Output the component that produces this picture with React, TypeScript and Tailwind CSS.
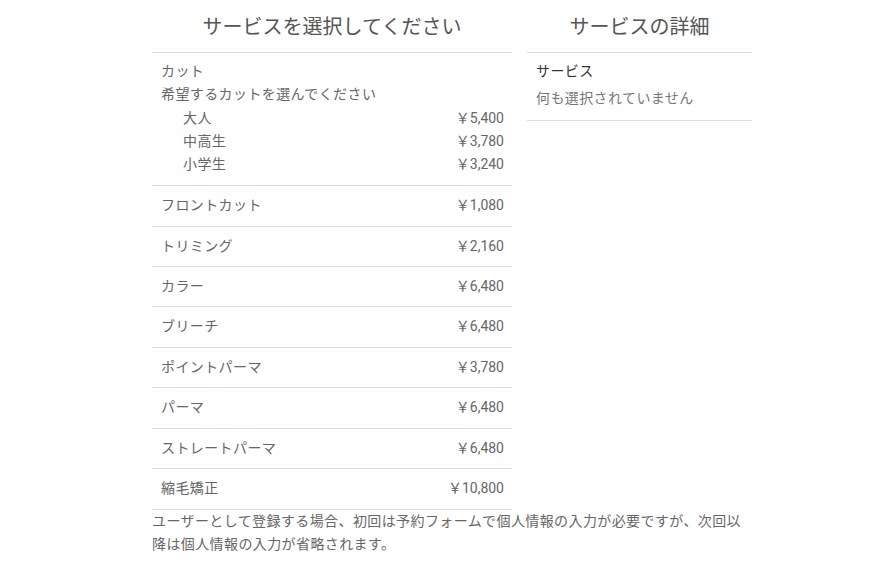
const cutOptions = [
  { name: '大人', price: '￥5,400' },
  { name: '中高生', price: '￥3,780' },
  { name: '小学生', price: '￥3,240' },
];

const services = [
  { name: 'フロントカット', price: '￥1,080' },
  { name: 'トリミング', price: '￥2,160' },
  { name: 'カラー', price: '￥6,480' },
  { name: 'ブリーチ', price: '￥6,480' },
  { name: 'ポイントパーマ', price: '￥3,780' },
  { name: 'パーマ', price: '￥6,480' },
  { name: 'ストレートパーマ', price: '￥6,480' },
  { name: '縮毛矯正', price: '￥10,800' },
];

const sans = { fontFamily: 'Roboto, "Noto Sans CJK JP", sans-serif' };
const serif = { fontFamily: '"Liberation Serif", "Noto Sans CJK JP", serif' };

export default function App() {
  return (
    <div className="min-h-screen w-full bg-white text-[14px] tracking-[0.4px] text-[#666]" style={sans}>
      <div className="ml-[152px] w-[600px]">
        <div className="flex gap-[15px]">
          {/* service list */}
          <div className="w-[360px]">
            <h2
              className="border-b border-[#ddd] pt-[13px] pb-[11px] text-center text-[20px] leading-[28px] tracking-normal text-[#555]"
              style={serif}
            >
              サービスを選択してください
            </h2>

            <div className="border-b border-[#ddd] pt-[7px] pb-[9px] pl-[9px] pr-[8px] leading-[23.25px]">
              <div>カット</div>
              <div>希望するカットを選んでください</div>
              {cutOptions.map((o) => (
                <div key={o.name} className="flex justify-between pl-[22px]">
                  <span>{o.name}</span>
                  <span className="tracking-normal">{o.price}</span>
                </div>
              ))}
            </div>

            {services.map((s) => (
              <div
                key={s.name}
                className="flex justify-between border-b border-[#ddd] py-[9px] pl-[9px] pr-[8px] leading-[21.4px]"
              >
                <span>{s.name}</span>
                <span className="tracking-normal">{s.price}</span>
              </div>
            ))}
          </div>

          {/* details */}
          <div className="w-[225px]">
            <h2
              className="border-b border-[#ddd] pt-[13px] pb-[11px] text-center text-[20px] leading-[28px] tracking-normal text-[#555]"
              style={serif}
            >
              サービスの詳細
            </h2>
            <div className="border-b border-[#ddd] pt-[7px] pb-[10px] pl-[9px] leading-[23px]">
              <div className="mb-[4px] text-[#333]">サービス</div>
              <div className="text-[#777]">何も選択されていません</div>
            </div>
          </div>
        </div>

        <p className="leading-[23px] text-[#666]">
          ユーザーとして登録する場合、初回は予約フォームで個人情報の入力が必要ですが、次回以降は個人情報の入力が省略されます。
        </p>
      </div>
    </div>
  );
}
